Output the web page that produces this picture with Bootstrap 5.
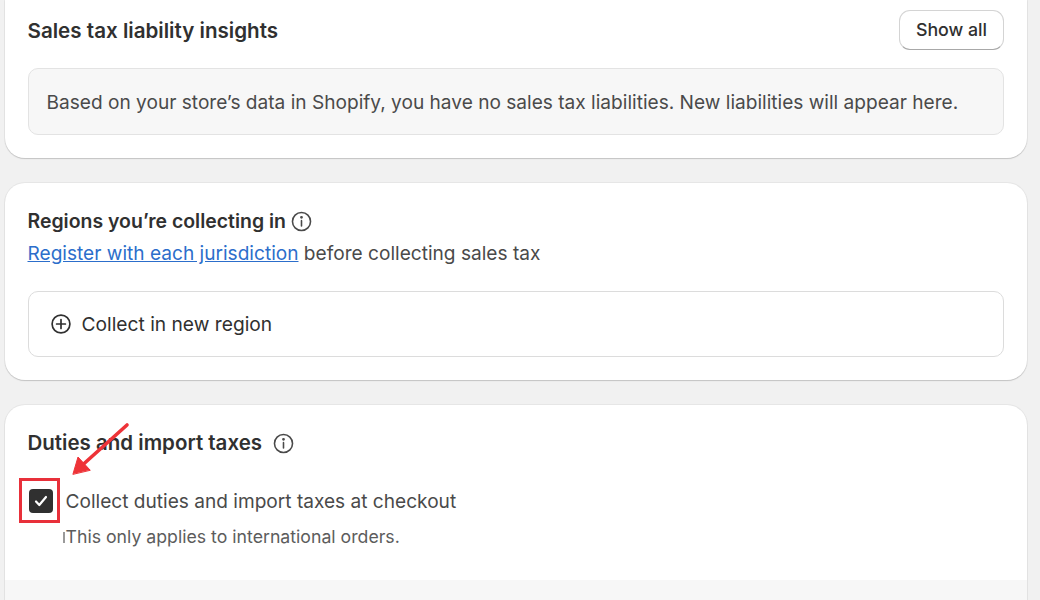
<!DOCTYPE html>
<html lang="en">
<head>
<meta charset="utf-8">
<title>Taxes and duties</title>
<link href="https://cdn.jsdelivr.net/npm/bootstrap@5.3.0/dist/css/bootstrap.min.css" rel="stylesheet">
<style>
html,body{height:600px;overflow:hidden}
body{background:#f1f1f1;font-family:Inter,"Liberation Sans",sans-serif;color:#303030;position:relative}
.page-wrap{width:1022px;margin-left:5px;gap:25px}
.panel{background:#fff;border-radius:20px;box-shadow:0 1px 1px #c4c4c4,0 0 0 1px #e6e6e6}
.panel-one{height:158px;padding:0 23px 0 22.5px;border-top-left-radius:0;border-top-right-radius:0}
.panel-two{height:197px;padding:26px 23px 0 22.5px}
.panel-three{height:220px;padding:26px 0 0 22.5px;overflow:hidden;position:relative}
.head-row{height:60px;padding-top:10px}
.ttl{font-size:20.6px;font-weight:600;color:#303030;line-height:24px;margin:0}
.ttl-one{margin-top:9px}
.ttl-reg{font-size:19.45px}
.ttl-dut{font-size:20.5px}
.show-btn{width:105px;height:40px;border:1px solid #d4d4d4;border-bottom-color:#a8a8a8;border-radius:11px;background:#fff;font-size:17.8px;font-weight:500;color:#303030;padding:0}
.note-box{height:67px;background:#f7f7f7;border:1px solid #e3e3e3;border-radius:10px;padding:2px 18px 0;font-size:19.1px;color:#4a4a4a;white-space:nowrap}
.sub-line{font-size:19.1px;line-height:24px;color:#4a4a4a;margin-top:8px}
.sub-line a{color:#2c6ecb}
.add-box{height:66px;margin-top:26px;border:1px solid #dcdcdc;border-radius:10px;padding:0 21px 0 22px;font-size:19.2px;color:#303030;gap:11px}
.info-ic{width:21px;height:21px;flex:none}
.info-reg{margin-left:5px}
.info-dut{margin-left:11px}
.check-row{margin-top:34px;margin-left:1px;font-size:19.1px;line-height:24px;color:#4a4a4a;gap:13px}
.check-tile{width:24px;height:24px;background:#303030;border-radius:4px;flex:none}
.hint-line{font-size:17.7px;line-height:24px;color:#5c5c5c;margin:12px 0 0 35px;display:flex;align-items:center}
.hint-mark{display:block;width:2px;height:11px;background:#9a9a9a;flex:none;margin-right:1px}
.foot-band{position:absolute;left:0;right:0;top:175px;height:45px;background:#f7f7f7}
.mark-rect{position:absolute;left:19px;top:478px;width:41px;height:45px;border:3px solid #e8303a}
.mark-arrow{position:absolute;left:68px;top:422px;width:64px;height:56px}
</style>
</head>
<body>
<div class="page-wrap d-flex flex-column">
  <section class="panel panel-one">
    <div class="head-row d-flex justify-content-between align-items-start">
      <h2 class="ttl ttl-one">Sales tax liability insights</h2>
      <button type="button" class="btn show-btn">Show all</button>
    </div>
    <div class="note-box d-flex align-items-center mt-2">Based on your store’s data in Shopify, you have no sales tax liabilities. New liabilities will appear here.</div>
  </section>

  <section class="panel panel-two">
    <div class="d-flex align-items-center">
      <h2 class="ttl ttl-reg">Regions you’re collecting in</h2>
      <svg class="info-ic info-reg" viewBox="0 0 20 20" fill="none" stroke="#4a4a4a" stroke-width="1.5"><circle cx="10" cy="10" r="8.6"/><path d="M10 9.2v5" stroke-linecap="round"/><circle cx="10" cy="6" r=".6" fill="#4a4a4a"/></svg>
    </div>
    <div class="sub-line"><a href="#">Register with each jurisdiction</a> before collecting sales tax</div>
    <div class="add-box d-flex align-items-center">
      <svg width="20" height="20" viewBox="0 0 20 20" fill="none" stroke="#303030" stroke-width="1.7"><circle cx="10" cy="10" r="8.9"/><path d="M10 5.6v8.8M5.6 10h8.8" stroke-linecap="round"/></svg>
      <span>Collect in new region</span>
    </div>
  </section>

  <section class="panel panel-three">
    <div class="d-flex align-items-center">
      <h2 class="ttl ttl-dut">Duties and import taxes</h2>
      <svg class="info-ic info-dut" viewBox="0 0 20 20" fill="none" stroke="#4a4a4a" stroke-width="1.5"><circle cx="10" cy="10" r="8.6"/><path d="M10 9.2v5" stroke-linecap="round"/><circle cx="10" cy="6" r=".6" fill="#4a4a4a"/></svg>
    </div>
    <div class="check-row d-flex align-items-center">
      <span class="check-tile d-flex align-items-center justify-content-center">
        <svg width="14" height="12" viewBox="0 0 14 12" fill="none" stroke="#fff" stroke-width="2.2" stroke-linecap="round" stroke-linejoin="round"><path d="M2 6.5 5.3 10 12 2"/></svg>
      </span>
      <span>Collect duties and import taxes at checkout</span>
    </div>
    <div class="hint-line"><span class="hint-mark"></span><span>This only applies to international orders.</span></div>
    <div class="foot-band"></div>
  </section>
</div>
<div class="mark-rect"></div>
<svg class="mark-arrow" viewBox="0 0 64 56" fill="none" stroke="#ee3338" stroke-width="3.6" stroke-linecap="round"><path d="M59 3 10 47"/><path d="M5 52 10 35 22 48Z" fill="#ee3338" stroke-width="1" stroke-linejoin="round"/></svg>
</body>
</html>
